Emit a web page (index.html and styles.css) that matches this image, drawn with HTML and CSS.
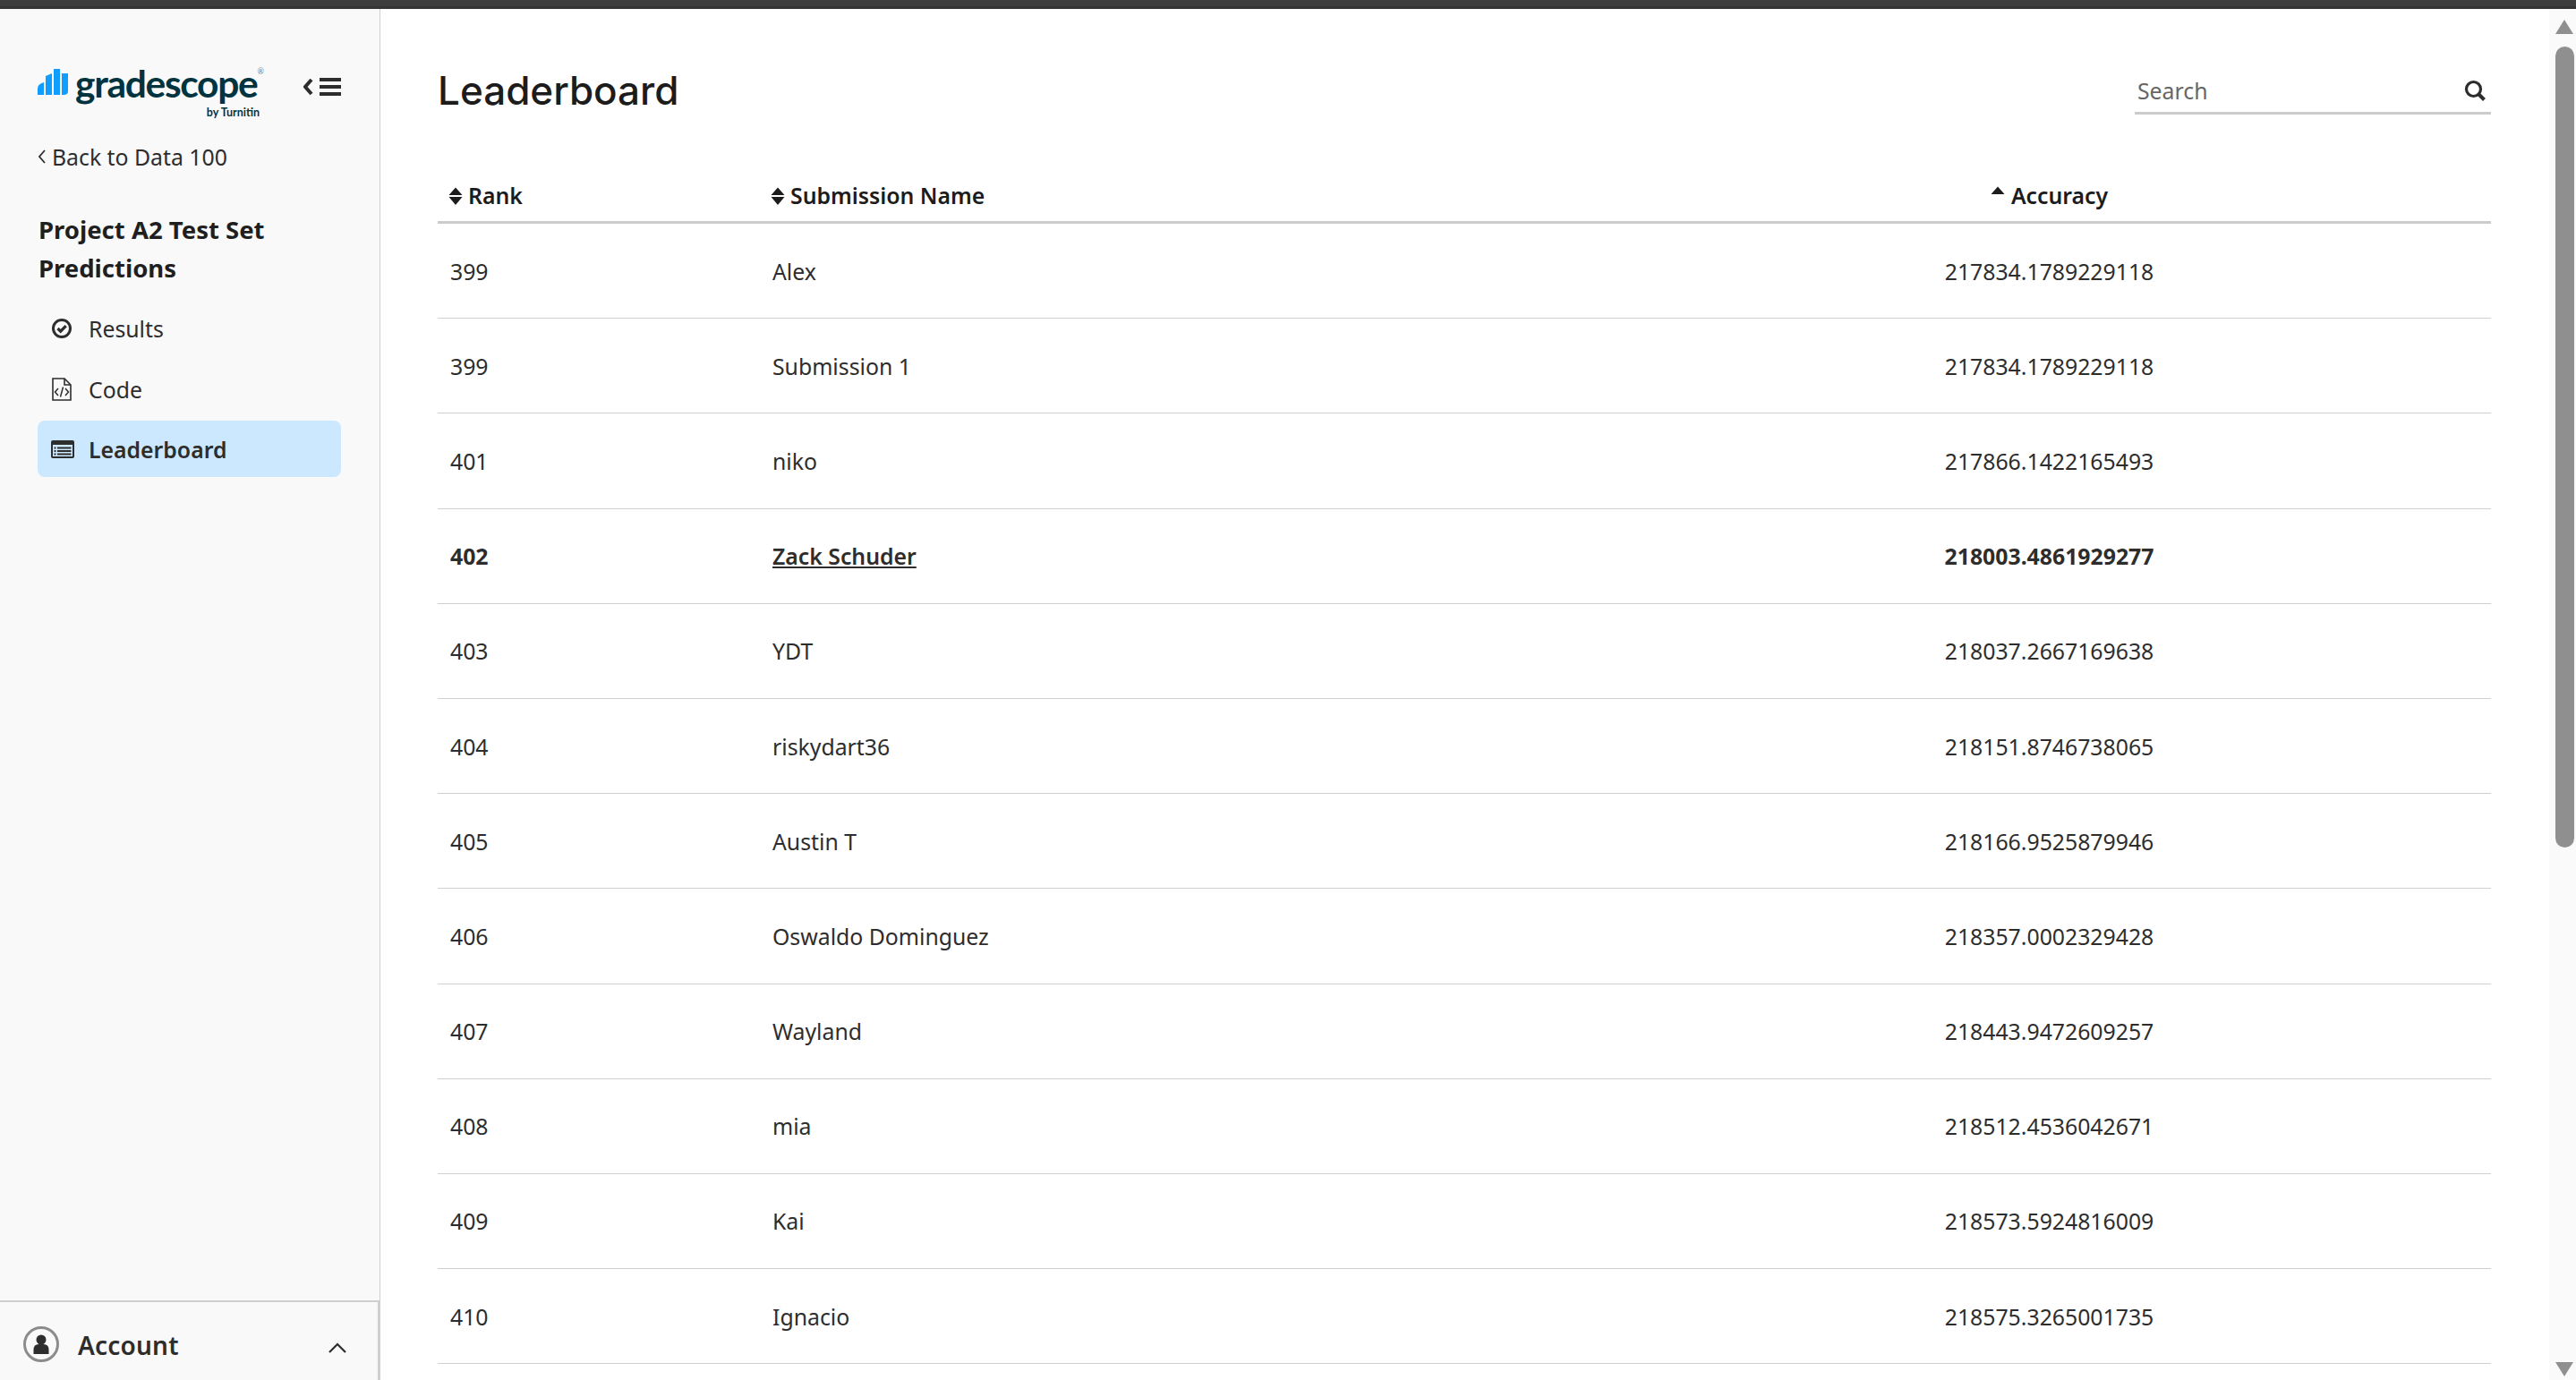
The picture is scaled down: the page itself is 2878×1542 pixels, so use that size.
FILE: index.html
```html
<!DOCTYPE html>
<html lang="en">
<head>
<meta charset="utf-8">
<title>Leaderboard</title>
<link rel="stylesheet" href="styles.css">
</head>
<body>
<div class="topbar"></div>
<div class="app">
  <aside class="sidebar">
    <div class="brand">
      <div class="logo">
        <svg class="logo-bars" viewBox="0 0 34 29" width="34" height="29"><path fill="#0f9dff" d="M0 29V22Q0 17 7 15V29ZM9 29V8L16 5V29ZM18 29V0H25V29ZM27 29V5H34V25Q34 29 29 29Z"/></svg>
        <div class="logo-words">
          <span class="logo-name">gradescope<sup class="logo-reg">®</sup></span>
          <span class="logo-by">by Turnitin</span>
        </div>
      </div>
      <svg class="collapse" viewBox="0 0 42 20" width="42" height="20"><path d="M9 2 2 10l7 8" fill="none" stroke="#2d2d2d" stroke-width="4"/><path d="M18 0h24v4H18zM18 8h24v4H18zM18 16h24v4H18z" fill="#2d2d2d"/></svg>
    </div>
    <a class="back"><svg viewBox="0 0 8 16" width="8" height="16"><path d="M7 1 1 8l6 7" fill="none" stroke="#2d2d2d" stroke-width="1.800"/></svg><span>Back to Data 100</span></a>
    <h2 class="assignment">Project A2 Test Set Predictions</h2>
    <nav class="nav">
      <a class="nav-item"><span class="nav-icon"><svg viewBox="0 0 22 22" width="22" height="22"><circle cx="11" cy="11" r="9.500" fill="none" stroke="#2d2d2d" stroke-width="3"/><path d="m6.500 11 3.200 3.200 6-6" fill="none" stroke="#2d2d2d" stroke-width="3.200"/></svg></span>Results</a>
      <a class="nav-item"><span class="nav-icon"><svg viewBox="0 0 22 26" width="22" height="26"><path d="M1 1h13l7 7v17H1z" fill="none" stroke="#2d2d2d" stroke-width="1.600"/><path d="M14 1v7h7" fill="none" stroke="#2d2d2d" stroke-width="1.600"/><path d="M7 12l-3.500 4L7 20M15 12l3.500 4-3.500 4M12.500 10.500 9.500 21.500" fill="none" stroke="#2d2d2d" stroke-width="1.500"/></svg></span>Code</a>
      <a class="nav-item nav-active"><span class="nav-icon"><svg viewBox="0 0 26 20" width="26" height="20"><rect x="0" y="0" width="26" height="20" rx="2" fill="#2d2d2d"/><rect x="2" y="5" width="22" height="13" fill="#cce8ff"/><path d="M3.500 7.500h2v2h-2zM7 7.500h15.500v2H7zM3.500 11h2v2h-2zM7 11h15.500v2H7zM3.500 14.500h2v2h-2zM7 14.500h15.500v2H7z" fill="#2d2d2d"/></svg></span>Leaderboard</a>
    </nav>
    <div class="account">
      <svg viewBox="0 0 40 40" width="40" height="40"><circle cx="20" cy="20" r="18.500" fill="none" stroke="#8c8c8c" stroke-width="3"/><circle cx="20" cy="15" r="5.500" fill="#2d2d2d"/><path d="M11.500 31v-5q0-6 6-6h5q6 0 6 6v5z" fill="#2d2d2d"/></svg>
      <span class="account-name">Account</span>
      <svg class="account-chev" viewBox="0 0 20 12" width="20" height="12"><path d="m1 11 9-9 9 9" fill="none" stroke="#2d2d2d" stroke-width="2.200"/></svg>
    </div>
  </aside>
  <main class="main">
    <header class="page-head">
      <h1 class="page-title">Leaderboard</h1>
      <div class="search">
        <span class="search-text">Search</span>
        <svg viewBox="0 0 24 24" width="24" height="24"><circle cx="10.500" cy="10.500" r="8" fill="none" stroke="#2d2d2d" stroke-width="3.200"/><path d="m16 16 6.500 6.500" stroke="#2d2d2d" stroke-width="4" fill="none"/></svg>
      </div>
    </header>
    <table class="board">
      <colgroup><col class="col-rank"><col class="col-name"><col class="col-acc"></colgroup>
      <thead>
        <tr>
          <th><svg class="sort" viewBox="0 0 16 20" width="16" height="20"><path d="M8 0.500l7.500 8.500H.5zM.5 11h15L8 20z" fill="#1c1c1c"/></svg>Rank</th>
          <th><svg class="sort" viewBox="0 0 16 20" width="16" height="20"><path d="M8 0.500l7.500 8.500H.5zM.5 11h15L8 20z" fill="#1c1c1c"/></svg>Submission Name</th>
          <th class="acc"><svg class="sort sort-up" viewBox="0 0 16 20" width="16" height="20"><path d="M8 0.500l7.500 8.500H.5z" fill="#1c1c1c"/></svg>Accuracy</th>
        </tr>
      </thead>
      <tbody>
        <tr><td>399</td><td>Alex</td><td class="acc">217834.1789229118</td></tr>
        <tr><td>399</td><td>Submission 1</td><td class="acc">217834.1789229118</td></tr>
        <tr><td>401</td><td>niko</td><td class="acc">217866.1422165493</td></tr>
        <tr class="me"><td>402</td><td><u>Zack Schuder</u></td><td class="acc">218003.4861929277</td></tr>
        <tr><td>403</td><td>YDT</td><td class="acc">218037.2667169638</td></tr>
        <tr><td>404</td><td>riskydart36</td><td class="acc">218151.8746738065</td></tr>
        <tr><td>405</td><td>Austin T</td><td class="acc">218166.9525879946</td></tr>
        <tr><td>406</td><td>Oswaldo Dominguez</td><td class="acc">218357.0002329428</td></tr>
        <tr><td>407</td><td>Wayland</td><td class="acc">218443.9472609257</td></tr>
        <tr><td>408</td><td>mia</td><td class="acc">218512.4536042671</td></tr>
        <tr><td>409</td><td>Kai</td><td class="acc">218573.5924816009</td></tr>
        <tr><td>410</td><td>Ignacio</td><td class="acc">218575.3265001735</td></tr>
      </tbody>
    </table>
  </main>
  <div class="scrollbar">
    <div class="arrow-up"></div>
    <div class="thumb"></div>
    <div class="track-rest"></div>
    <div class="arrow-down"></div>
  </div>
</div>
</body>
</html>
```
FILE: styles.css
```css
* { box-sizing: border-box; }
html, body { margin: 0; height: 100%; overflow: hidden; }
body {
  display: flex;
  flex-direction: column;
  background: #fff;
  color: #2d2d2d;
  font-family: "Noto Sans", "Open Sans", sans-serif;
  font-size: 24.800px;
}
.topbar {
  flex: 0 0 10px;
  background: #3e3e3e;
  border-bottom: 3px solid #353535;
}
.app { flex: 1; display: flex; min-height: 0; }

.sidebar {
  flex: 0 0 425px;
  display: flex;
  flex-direction: column;
  background: #f9f9f9;
  border-right: 1px solid #cfcfcf;
}
.brand {
  display: flex;
  justify-content: space-between;
  align-items: center;
  padding: 60px 43px 0 42px;
  height: 128px;
}
.logo { display: flex; gap: 8px; align-items: flex-start; margin-top: -2px; }
.logo-bars { margin-top: 3px; }
.logo-words { display: flex; flex-direction: column; width: 208px; }
.logo-name {
  font-family: Lato, sans-serif;
  font-weight: 700;
  font-size: 42.500px;
  line-height: 38px;
  color: #02343f;
  letter-spacing: -1.300px;
  white-space: nowrap;
}
.logo-reg { font-size: 9px; font-weight: 400; color: #6b8a90; line-height: 0; vertical-align: 26px; }
.logo-by {
  align-self: flex-end;
  font-family: Lato, sans-serif;
  font-weight: 700;
  font-size: 12.500px;
  line-height: 15px;
  margin-top: 6px;
  margin-right: 2px;
  color: #02343f;
}
.collapse { margin-top: -14px; }
.back {
  display: flex;
  align-items: center;
  gap: 7px;
  margin: 19px 0 0 43px;
  line-height: 36px;
  color: #2d2d2d;
}
.assignment {
  margin: 42px 40px 0 43px;
  font-size: 27.500px;
  font-weight: 700;
  line-height: 43px;
  color: #1f1f1f;
}
.nav { display: flex; flex-direction: column; margin: 14px 43px 0 42px; }
.nav-item {
  display: flex;
  align-items: center;
  height: 63px;
  margin-bottom: 4px;
  border-radius: 8px;
  padding-left: 16px;
  color: #2d2d2d;
}
.nav-item:first-child { margin-bottom: 5px; }
.nav-icon { flex: 0 0 41px; display: flex; align-items: center; }
.nav-active { background: #cce8ff; font-weight: 600; padding-left: 15px; }
.nav-active .nav-icon { flex-basis: 42px; }
.account {
  margin-top: auto;
  height: 89px;
  border-top: 2px solid #cfcfcf;
  border-right: 2px solid #cfcfcf;
  display: flex;
  align-items: center;
  padding: 6px 35px 0 26px;
  gap: 21px;
}
.account-name { font-size: 28px; font-weight: 600; color: #2d2d2d; letter-spacing: 0.2px; margin-top: 2px; }
.account-chev { margin-left: auto; margin-top: 8px; }

.main { flex: 1; min-width: 0; padding: 0 65px 0 64px; }
.page-head {
  display: flex;
  justify-content: space-between;
  align-items: flex-start;
  height: 166px;
}
.page-title {
  margin: 63px 0 0;
  font-family: Inter, sans-serif;
  font-size: 44px;
  line-height: 56px;
  font-weight: 500;
  color: #1c1c1c;
}
.search {
  width: 398px;
  height: 58px;
  margin-top: 60px;
  display: flex;
  align-items: center;
  justify-content: space-between;
  padding: 7px 6px 0 3px;
  border-bottom: 3px solid #cccccc;
  margin-left: -1px;
}
.search-text { color: #666; }

.board { width: 100%; table-layout: fixed; border-collapse: separate; border-spacing: 0; }
.col-rank { width: 360px; }
.col-name { width: 947px; }
.board th {
  height: 74px;
  padding: 13px 14px 0;
  text-align: left;
  font-weight: 600;
  color: #1c1c1c;
  border-bottom: 3px solid #cccccc;
  white-space: nowrap;
}
.board td {
  height: 106.200px;
  padding: 0 14px;
  border-bottom: 1px solid #d0d0d0;
  color: #2d2d2d;
}
.board th.acc, .board td.acc { text-align: center; }
.sort { vertical-align: middle; margin: 0 6px 0 -2px; position: relative; top: -2px; }
.sort-up { top: -3px; margin: 0 7px 0 0; }
.me td { font-weight: 700; }
.me td:nth-child(2) { font-weight: 600; }

.scrollbar {
  flex: 0 0 30px;
  display: flex;
  flex-direction: column;
  align-items: flex-start;
  padding: 12px 0 4px 7px;
  background: #fafafa;
}
.arrow-up, .arrow-down {
  width: 0;
  height: 0;
  border-left: 10.500px solid transparent;
  border-right: 10.500px solid transparent;
}
.arrow-up { border-bottom: 16px solid #8f8f8f; }
.arrow-down { border-top: 16px solid #8f8f8f; }
.thumb {
  width: 21px;
  height: 895px;
  margin-top: 14px;
  background: #8f8f8f;
  border-radius: 10.500px;
}
.track-rest { flex: 1; }
```
